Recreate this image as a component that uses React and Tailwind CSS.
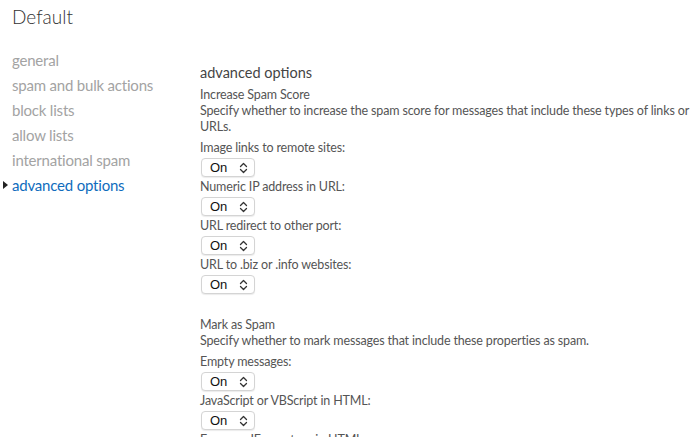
import React from 'react';

const font = { fontFamily: 'Lato, "Open Sans", sans-serif' };

const navItems = [
    'general',
    'spam and bulk actions',
    'block lists',
    'allow lists',
    'international spam',
    'advanced options',
];

const Chevrons = () => (
    <svg width="9" height="12" viewBox="0 0 9 12" fill="none" stroke="#333" strokeWidth="1.3" strokeLinecap="round" strokeLinejoin="round">
        <path d="M1.5 4.5 L4.5 1.5 L7.5 4.5" />
        <path d="M1.5 7.5 L4.5 10.5 L7.5 7.5" />
    </svg>
);

const OnSelect = () => (
    <div className="ml-[1px] w-[54px] h-[19px] rounded-[4px] border border-[#d4d4d4] bg-white shadow-[0_1px_1px_rgba(0,0,0,0.08)] flex items-center justify-between pl-[8px] pr-[6px]">
        <span className="text-[13px] font-medium text-[#111]" style={{ fontFamily: '"Liberation Sans", Arial, sans-serif' }}>On</span>
        <Chevrons />
    </div>
);

const Option = ({ label }) => (
    <div className="flex flex-col gap-[2px] mb-[2px]">
        <div className="text-[12.5px] leading-[16px] tracking-[-0.15px] text-[#555]">{label}</div>
        <OnSelect />
    </div>
);

const Section = ({ title, description, options, className }) => (
    <div className={className}>
        <div className="text-[12.5px] leading-[16px] tracking-[-0.15px] text-[#555]">{title}</div>
        <div className="text-[12.5px] leading-[16px] tracking-[-0.15px] text-[#555] mb-[5px]">{description}</div>
        {options.map((o) => (
            <Option key={o} label={o} />
        ))}
    </div>
);

export default function App() {
    return (
        <div className="w-[693px] h-[437px] overflow-hidden bg-white" style={font}>
            <div className="pt-[4px] pl-[12px] text-[19px] leading-[26px] font-light text-[#333]">Default</div>
            <div className="flex mt-[18px]">
                <div className="w-[200px] shrink-0">
                    {navItems.map((item) => {
                        const active = item === 'advanced options';
                        return (
                            <div key={item} className="relative pl-[12px] text-[15px] leading-[25px] tracking-[-0.2px]">
                                {active && (
                                    <span className="absolute left-[3px] top-[8px] w-0 h-0 border-y-[4px] border-y-transparent border-l-[5px] border-l-[#222]" />
                                )}
                                <span className={active ? 'text-[#0f6cbd]' : 'text-[#a3a3a3]'}>{item}</span>
                            </div>
                        );
                    })}
                </div>
                <div className="w-[490px] pt-[15px]">
                    <div className="text-[14.5px] leading-[20px] text-[#444] mb-[4px]">advanced options</div>
                    <Section
                        title="Increase Spam Score"
                        description="Specify whether to increase the spam score for messages that include these types of links or URLs."
                        options={[
                            'Image links to remote sites:',
                            'Numeric IP address in URL:',
                            'URL redirect to other port:',
                            'URL to .biz or .info websites:',
                        ]}
                    />
                    <Section
                        className="mt-[23px]"
                        title="Mark as Spam"
                        description="Specify whether to mark messages that include these properties as spam."
                        options={[
                            'Empty messages:',
                            'JavaScript or VBScript in HTML:',
                            'Frame or IFrame tags in HTML:',
                        ]}
                    />
                </div>
            </div>
        </div>
    );
}
